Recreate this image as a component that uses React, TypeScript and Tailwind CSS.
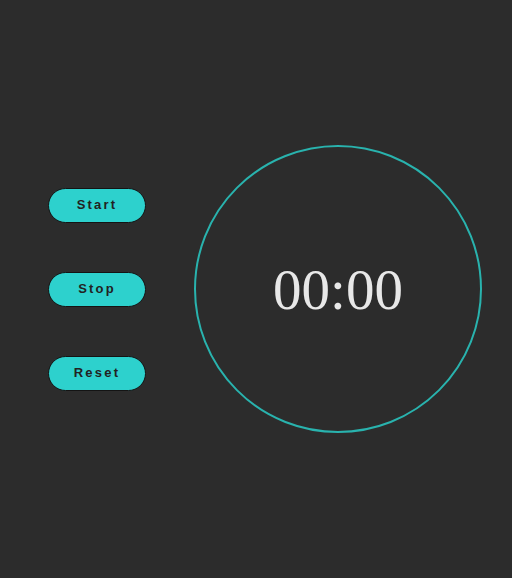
const buttons = ["Start", "Stop", "Reset"];

export default function App() {
  return (
    <div className="h-[578px] w-full bg-[#2c2c2c] flex items-center pl-[48px] gap-[48px]">
      <div className="flex flex-col gap-[49px]">
        {buttons.map((b) => (
          <button
            key={b}
            className="w-[98px] h-[35px] rounded-full bg-[#2dd1cd] border border-[#141414] text-[#222222] text-[13px] font-extrabold tracking-[2.2px] font-['Liberation_Sans',Arial,sans-serif]"
          >
            {b}
          </button>
        ))}
      </div>
      <div className="w-[288px] h-[288px] rounded-full border-2 border-[#29b3ae] flex items-center justify-center">
        <span className="text-[#e8e8e8] text-[57px] leading-none font-['Liberation_Serif','Times_New_Roman',serif]">
          00:00
        </span>
      </div>
    </div>
  );
}
